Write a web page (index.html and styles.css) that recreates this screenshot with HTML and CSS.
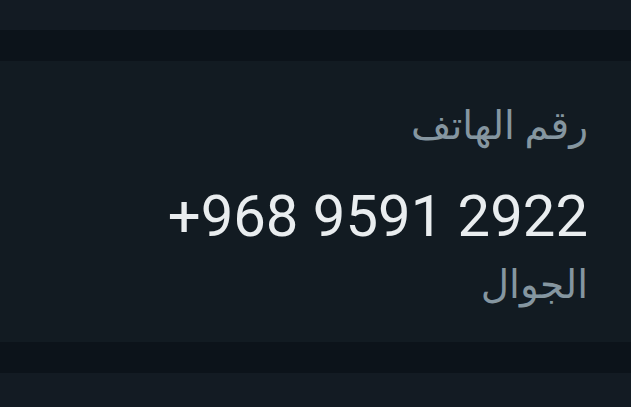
FILE: index.html
```html
<!DOCTYPE html>
<html lang="ar" dir="rtl">
<head>
<meta charset="utf-8">
<link rel="stylesheet" href="styles.css">
</head>
<body>
<div class="page">
  <div class="top"></div>
  <div class="sep"></div>
  <section class="panel">
    <div class="title">رقم الهاتف</div>
    <div class="number" dir="ltr">+968 9591 2922</div>
    <div class="type">الجوال</div>
  </section>
  <div class="sep"></div>
  <div class="bottom"></div>
</div>
</body>
</html>
```
FILE: styles.css
```css
html, body {
  margin: 0;
  padding: 0;
  background: #121b22;
}
.page {
  width: 631px;
  height: 407px;
  overflow: hidden;
  display: flex;
  flex-direction: column;
  font-family: Roboto, "Noto Sans", "DejaVu Sans", sans-serif;
}
.top {
  height: 30px;
  background: #131b23;
}
.sep {
  height: 31px;
  background: #0c131a;
}
.panel {
  height: 281px;
  background: #121b22;
  box-sizing: border-box;
  padding: 35px 43px 0 0;
  display: flex;
  flex-direction: column;
  align-items: flex-start;
}
.title {
  font-size: 39px;
  line-height: 60px;
  color: #8596a0;
}
.number {
  font-size: 58px;
  line-height: 70px;
  color: #e9edef;
  margin-top: 25px;
}
.type {
  font-size: 39px;
  line-height: 50px;
  color: #8596a0;
  margin-top: 9px;
}
.bottom {
  flex: 1;
  background: #131b23;
}
```
